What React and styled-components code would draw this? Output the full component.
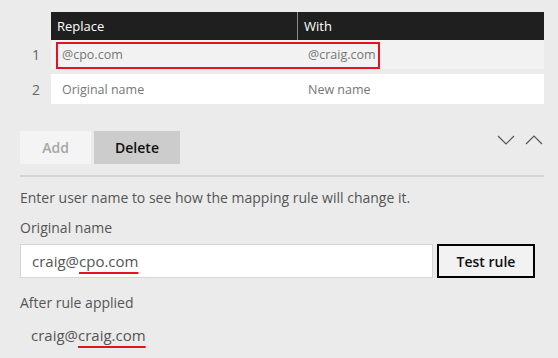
import React from 'react';
import styled, { createGlobalStyle } from 'styled-components';

const Global = createGlobalStyle`
    html, body {
        margin: 0;
        background: #ebebeb;
        font-family: 'Segoe UI', 'Open Sans', sans-serif;
    }
`;

const Page = styled.div`
    width: 558px;
    height: 358px;
    padding: 12px 14px 0 20px;
    box-sizing: border-box;
    overflow: hidden;
`;

const Table = styled.div`
    display: flex;
    flex-direction: column;
    gap: 5px;
`;

const Group = styled.div`
    display: flex;
    flex-direction: column;
`;

const Row = styled.div`
    display: flex;
    align-items: stretch;
    height: ${(props) => props.h}px;
    position: relative;
`;

const Num = styled.div`
    width: 30px;
    display: flex;
    align-items: center;
    justify-content: center;
    padding-left: 1px;
    font-size: 14px;
    color: #666;
`;

const HeaderBar = styled.div`
    display: flex;
    flex: 1;
    background: #1f1f1f;
`;

const HeadCell = styled.div`
    width: ${(props) => props.w || 'auto'};
    flex: ${(props) => (props.w ? 'none' : 1)};
    display: flex;
    align-items: center;
    padding-left: 6px;
    box-sizing: border-box;
    color: #fff;
    font-size: 13px;
    border-right: ${(props) => (props.divider ? '1px solid #8a8a8a' : 'none')};
`;

const Body = styled.div`
    display: flex;
    flex: 1;
    background: ${(props) => props.bg};
`;

const Cell = styled.div`
    width: ${(props) => props.w || 'auto'};
    flex: ${(props) => (props.w ? 'none' : 1)};
    display: flex;
    align-items: center;
    padding-left: ${(props) => props.pl}px;
    box-sizing: border-box;
    color: #767676;
    font-size: 12.5px;
`;

const Highlight = styled.div`
    position: absolute;
    left: 36px;
    top: 2px;
    width: 324px;
    height: 27px;
    border: 2px solid #e81123;
    box-sizing: border-box;
    pointer-events: none;
`;

const Toolbar = styled.div`
    display: flex;
    align-items: center;
    margin-top: 27px;
    gap: 3px;
`;

const Btn = styled.div`
    width: ${(props) => props.w}px;
    height: 33px;
    display: flex;
    align-items: center;
    justify-content: center;
    background: ${(props) => props.bg};
    color: ${(props) => props.fg};
    font-size: 14px;
    font-weight: 600;
`;

const Arrows = styled.div`
    margin-left: auto;
    display: flex;
    gap: 10px;
    align-self: flex-start;
    margin-top: 4px;
    margin-right: 1px;
`;

const Divider = styled.div`
    height: 2px;
    background: #d4d4d4;
    margin-top: 11px;
`;

const Text = styled.div`
    font-size: 14px;
    color: #555;
    margin-top: ${(props) => props.mt}px;
    line-height: 20px;
`;

const InputRow = styled.div`
    display: flex;
    gap: 4px;
    margin-top: 6px;
    height: 34px;
`;

const Input = styled.div`
    width: 413px;
    background: #fff;
    border: 1px solid #d6d6d6;
    box-sizing: border-box;
    display: flex;
    align-items: center;
    padding-left: 11px;
    font-size: 15px;
    color: #555;
`;

const TestBtn = styled.div`
    width: 98px;
    border: 2px solid #000;
    box-sizing: border-box;
    background: #f2f2f2;
    display: flex;
    align-items: center;
    justify-content: center;
    font-size: 14px;
    font-weight: 600;
    color: #111;
`;

const Marked = styled.span`
    text-decoration: underline;
    text-decoration-color: #e81123;
    text-decoration-thickness: 2px;
    text-underline-offset: 5px;
`;

const Result = styled.div`
    font-size: 15px;
    color: #555;
    margin-top: 12px;
    padding-left: 11px;
`;

const Chevron = ({ up }) => (
    <svg width="18" height="10" viewBox="0 0 18 10">
        <path
            d={up ? 'M1 9 L9 1 L17 9' : 'M1 1 L9 9 L17 1'}
            fill="none"
            stroke="#555"
            strokeWidth="1.2"
        />
    </svg>
);

const App = () => (
    <>
        <Global />
        <Page>
            <Table>
                <Group>
                    <Row h={28}>
                        <Num />
                        <HeaderBar>
                            <HeadCell w="247px" divider>Replace</HeadCell>
                            <HeadCell>With</HeadCell>
                        </HeaderBar>
                    </Row>
                    <Row h={29}>
                        <Num>1</Num>
                        <Body bg="#f2f2f2">
                            <Cell w="247px" pl={11}>@cpo.com</Cell>
                            <Cell pl={10}>@craig.com</Cell>
                        </Body>
                        <Highlight />
                    </Row>
                </Group>
                <Row h={30}>
                    <Num>2</Num>
                    <Body bg="#fff">
                        <Cell w="247px" pl={11}>Original name</Cell>
                        <Cell pl={10}>New name</Cell>
                    </Body>
                </Row>
            </Table>
            <Toolbar>
                <Btn w={71} bg="#f4f4f4" fg="#a6a6a6">Add</Btn>
                <Btn w={86} bg="#cccccc" fg="#111">Delete</Btn>
                <Arrows>
                    <Chevron />
                    <Chevron up />
                </Arrows>
            </Toolbar>
            <Divider />
            <Text mt={11}>Enter user name to see how the mapping rule will change it.</Text>
            <Text mt={10}>Original name</Text>
            <InputRow>
                <Input>
                    craig@<Marked>cpo.com</Marked>
                </Input>
                <TestBtn>Test rule</TestBtn>
            </InputRow>
            <Text mt={15}>After rule applied</Text>
            <Result>
                craig@<Marked>craig.com</Marked>
            </Result>
        </Page>
    </>
);

export default App;
